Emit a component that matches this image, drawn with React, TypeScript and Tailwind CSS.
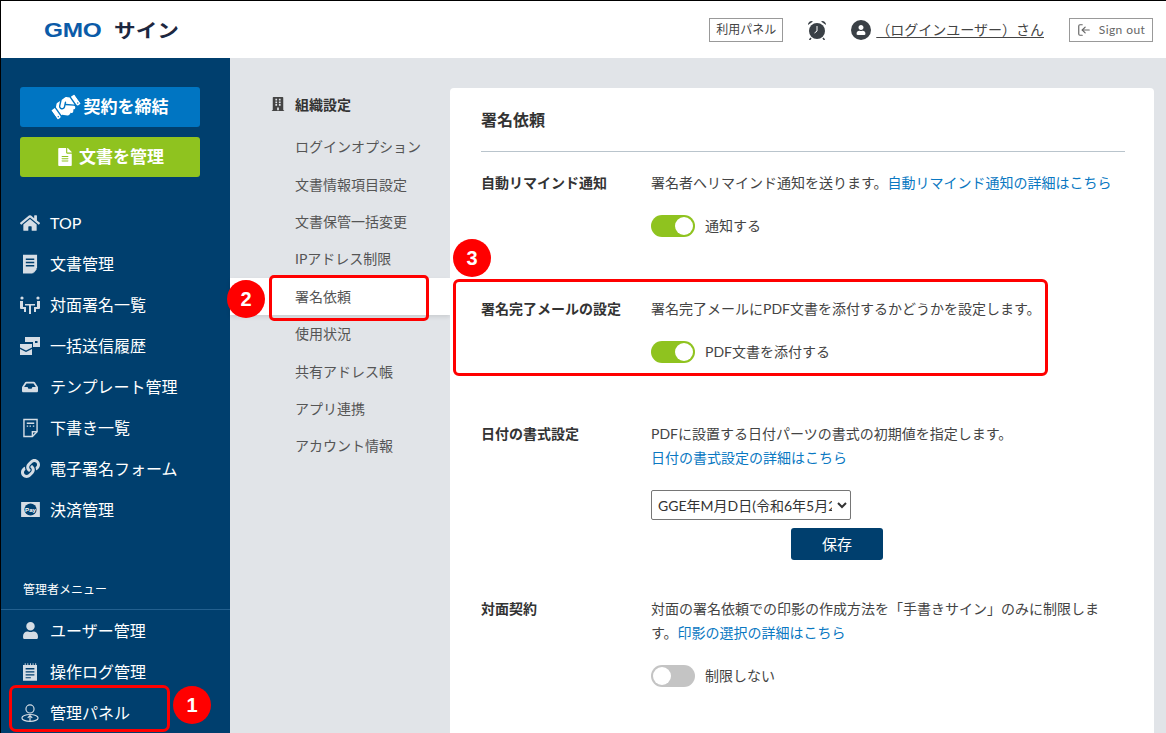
import {
  FaBuilding,
  FaFileAlt,
  FaHandshake,
  FaHome,
  FaInbox,
  FaLink,
  FaStickyNote,
  FaUser,
} from "react-icons/fa";
import { LuLogIn } from "react-icons/lu";
import type { ReactNode } from "react";

const FONT = "font-['Lato','Noto_Sans_CJK_JP',sans-serif]";

const DocIcon = () => (
  <svg viewBox="0 0 16 20" className="w-[15px] h-[20px]" fill="#d5dde5">
    <path d="M0 0h15v14l-5 6H0z" />
    <path d="M3 4h9v1.6H3zM3 7.5h9v1.6H3zM3 11h9v1.6H3z" fill="#003f6e" />
    <path d="M11 15h4l-4 5z" />
  </svg>
);

const FaceIcon = () => (
  <svg viewBox="0 0 20 20" className="w-[20px] h-[20px]" fill="#d5dde5">
    <circle cx="2" cy="3" r="1.6" />
    <circle cx="18" cy="3" r="1.6" />
    <path d="M0 6h3v6h3v5H4v-3H1a1 1 0 0 1-1-1zM20 6h-3v6h-3v5h2v-3h3a1 1 0 0 0 1-1z" />
    <path d="M5 9h10v1.5h-4V19H9v-8.500H5z" />
  </svg>
);

const BulkIcon = () => (
  <svg viewBox="0 0 20 20" className="w-[20px] h-[20px]" fill="#d5dde5">
    <path d="M5 1h15v10h-7V6H5z" />
    <rect x="15" y="5" width="2.500" height="2" fill="#003f6e" />
    <path d="M0 8h12v3.500L6 14.500 0 11.500z" />
    <path d="M0 13l6 3 6-3v6H0z" />
  </svg>
);

const DraftIcon = () => (
  <svg viewBox="0 0 16 20" className="w-[15px] h-[20px]" fill="none" stroke="#d5dde5" strokeWidth="1.500">
    <path d="M1 1h14v13l-5 5H1z" />
    <path d="M4 5h8M4 8h1.500M7 8h1.500M10.500 8h1.500" />
    <path d="M10 19v-5h5" />
  </svg>
);

const PayIcon = () => (
  <svg viewBox="0 0 20 16" className="w-[19px] h-[15px]">
    <rect width="20" height="16" fill="#d5dde5" />
    <circle cx="10" cy="8" r="6.500" fill="#003f6e" />
    <text x="10" y="10.500" textAnchor="middle" fontSize="6.500" fontWeight="700" fill="#fff" fontFamily="Liberation Sans">
      Pay
    </text>
  </svg>
);

const LogIcon = () => (
  <svg viewBox="0 0 16 20" className="w-[14px] h-[20px]" fill="#d5dde5">
    <path d="M0 2h16v18H0z" />
    <path d="M3 5.500h10v1.500H3zM3 9h10v1.500H3zM3 12.500h10v1.500H3zM3 16h6v1.200H3z" fill="#003f6e" />
    <path d="M2 0h1v3H2zM5 0h1v3H5zM8 0h1v3H8zM11 0h1v3h-1zM14 0h1v3h-1z" />
  </svg>
);

const AdminIcon = () => (
  <svg viewBox="0 0 20 20" className="w-[18px] h-[20px]" fill="none" stroke="#d5dde5" strokeWidth="1.300">
    <circle cx="10" cy="5.500" r="4.500" />
    <ellipse cx="10" cy="15.500" rx="9" ry="3.800" />
    <path d="M10 19v-5M7.500 15.500 10 13l2.500 2.500" />
  </svg>
);

const AlarmIcon = () => (
  <svg viewBox="0 0 20 20" className="w-[20px] h-[20px]">
    <circle cx="10" cy="11" r="8" fill="#3a4046" />
    <path d="M1 5a3.500 3.500 0 0 1 5-3.500zM19 5a3.500 3.500 0 0 0-5-3.500z" fill="#3a4046" />
    <path d="M10 6v5l-2.500 2" stroke="#fff" strokeWidth="1" fill="none" />
    <path d="M4 18l-1.500 2M16 18l1.500 2" stroke="#3a4046" strokeWidth="1.500" />
  </svg>
);

const Logo = () => (
  <div className="flex items-center h-[18px] leading-none select-none">
    <span className="font-['Liberation_Sans',sans-serif] font-bold text-[#0b5ba8] text-[20px] tracking-[-0.2px] scale-x-[1.22] origin-left w-[70px]">
      GMO
    </span>
    <span className="font-['Noto_Sans_CJK_JP',sans-serif] font-bold text-[#1d2740] text-[19px] scale-x-[1.14] origin-left">
      サイン
    </span>
  </div>
);

const Toggle = ({ on }: { on: boolean }) => (
  <div
    className={`w-[44px] h-[22px] rounded-full flex items-center px-[2px] ${
      on ? "bg-[#8fc31f] justify-end" : "bg-[#c4c4c4] justify-start"
    }`}
  >
    <div className="w-[18px] h-[18px] rounded-full bg-white" />
  </div>
);

const NavItem = ({ icon, label }: { icon: ReactNode; label: string }) => (
  <div className="h-[41px] flex items-center">
    <div className="w-[30px] ml-[19px] flex justify-center shrink-0 text-[#d5dde5] -translate-x-[5px]">{icon}</div>
    <span className="text-white text-[16px] leading-none">{label}</span>
  </div>
);

const mainNav: { icon: ReactNode; label: string }[] = [
  { icon: <FaHome size={20} />, label: "TOP" },
  { icon: <DocIcon />, label: "文書管理" },
  { icon: <FaceIcon />, label: "対面署名一覧" },
  { icon: <BulkIcon />, label: "一括送信履歴" },
  { icon: <FaInbox size={16} />, label: "テンプレート管理" },
  { icon: <DraftIcon />, label: "下書き一覧" },
  { icon: <FaLink size={19} />, label: "電子署名フォーム" },
  { icon: <PayIcon />, label: "決済管理" },
];

const adminNav: { icon: ReactNode; label: string }[] = [
  { icon: <FaUser size={17} />, label: "ユーザー管理" },
  { icon: <LogIcon />, label: "操作ログ管理" },
  { icon: <AdminIcon />, label: "管理パネル" },
];

const settingsMenu = [
  "ログインオプション",
  "文書情報項目設定",
  "文書保管一括変更",
  "IPアドレス制限",
  "署名依頼",
  "使用状況",
  "共有アドレス帳",
  "アプリ連携",
  "アカウント情報",
];

const Badge = ({ n, className }: { n: number; className: string }) => (
  <div
    className={`absolute w-[38px] h-[38px] rounded-full bg-[#ff0000] text-white font-bold text-[20px] flex items-center justify-center font-['Liberation_Sans',sans-serif] ${className}`}
  >
    {n}
  </div>
);

const Row = ({ label, className, children }: { label: string; className: string; children: ReactNode }) => (
  <div className={`flex ${className}`}>
    <div className="w-[170px] shrink-0 text-[14px] font-bold text-[#333] leading-[24px]">{label}</div>
    <div className="flex-1 text-[14px] text-[#444] leading-[24px]">{children}</div>
  </div>
);

const A = ({ children }: { children: ReactNode }) => <span className="text-[#0a78c2]">{children}</span>;

export default function App() {
  return (
    <div className={`relative w-[1166px] h-[733px] overflow-hidden bg-[#e1e4e8] border-t border-l border-black ${FONT}`}>
      {/* Header */}
      <header className="h-[57px] bg-white flex items-center pl-[43px] pr-[13px]">
        <Logo />
        <div className="ml-auto flex items-center text-[#444]">
          <div className="h-[24px] px-[6px] border border-[#999] text-[12px] flex items-center">利用パネル</div>
          <div className="ml-[24px]">
            <AlarmIcon />
          </div>
          <div className="ml-[24px] w-[20px] h-[20px] rounded-full bg-[#3a4046] flex items-center justify-center text-white">
            <FaUser size={10} />
          </div>
          <span className="ml-[5px] text-[14px] underline underline-offset-2">（ログインユーザー）さん</span>
          <div className="ml-[25px] h-[24px] w-[84px] border border-[#999] text-[12px] text-[#666] flex items-center justify-center gap-[8px] tracking-[0.4px]">
            <LuLogIn size={14} className="rotate-180" />
            Sign out
          </div>
        </div>
      </header>

      <div className="flex h-[675px]">
        {/* Sidebar */}
        <aside className="w-[229px] shrink-0 bg-[#003f6e] flex flex-col">
          <div className="pt-[29px] pl-[19px] flex flex-col gap-[10px]">
            <div className="w-[180px] h-[40px] rounded-[3px] bg-[#0075c2] text-white font-bold text-[17px] flex items-center justify-center gap-[4px]">
              <FaHandshake size={28} className="-rotate-[35deg]" />
              契約を締結
            </div>
            <div className="w-[180px] h-[40px] rounded-[3px] bg-[#8fc31f] text-white font-bold text-[17px] flex items-center justify-center gap-[5px]">
              <FaFileAlt size={18} />
              文書を管理
            </div>
          </div>
          <nav className="mt-[25px]">
            {mainNav.map((item) => (
              <NavItem key={item.label} icon={item.icon} label={item.label} />
            ))}
          </nav>
          <div className="mt-[50px] pl-[22px] text-white text-[12px] leading-[18px] h-[30px] pt-[1px]">管理者メニュー</div>
          <div className="border-t border-[#23608f]" />
          <nav>
            {adminNav.map((item) => (
              <NavItem key={item.label} icon={item.icon} label={item.label} />
            ))}
          </nav>
        </aside>

        {/* Settings menu */}
        <div className="w-[220px] shrink-0 pt-[30px]">
          <div className="flex items-center pl-[41px] h-[32px] text-[14px] font-bold text-[#333]">
            <FaBuilding size={14} className="text-[#444] mr-[10px]" />
            組織設定
          </div>
          <ul className="mt-[8px]">
            {settingsMenu.map((label) => (
              <li
                key={label}
                className={`h-[37.400px] pl-[65px] flex items-center text-[14px] text-[#555] ${
                  label === "署名依頼" ? "bg-white shadow-[0_2px_4px_rgba(0,0,0,0.1)] text-[#444]" : ""
                }`}
              >
                {label}
              </li>
            ))}
          </ul>
        </div>

        {/* Settings panel */}
        <main className="w-[704px] bg-white rounded-t-[4px] mt-[30px] pl-[31px] pr-[29px] relative">
          <h2 className="text-[16px] font-bold text-[#333] pt-[20px] h-[64px] leading-[24px] border-b border-[#b9c4cc]">署名依頼</h2>
          <Row label="自動リマインド通知" className="mt-[19px]">
            <p>
              署名者へリマインド通知を送ります。<A>自動リマインド通知の詳細はこちら</A>
            </p>
            <div className="flex items-center gap-[10px] mt-[19px]">
              <Toggle on />
              <span>通知する</span>
            </div>
          </Row>
          <Row label="署名完了メールの設定" className="mt-[59px]">
            <p>署名完了メールにPDF文書を添付するかどうかを設定します。</p>
            <div className="flex items-center gap-[10px] mt-[19px]">
              <Toggle on />
              <span>PDF文書を添付する</span>
            </div>
          </Row>
          <Row label="日付の書式設定" className="mt-[58px]">
            <p>PDFに設置する日付パーツの書式の初期値を指定します。</p>
            <p>
              <A>日付の書式設定の詳細はこちら</A>
            </p>
            <select className="block mt-[20px] w-[200px] h-[30px] border border-[#767676] rounded-[2px] bg-white text-[14px] text-[#333] px-[2px]">
              <option>GGE年M月D日(令和6年5月20日)</option>
            </select>
            <div className="mt-[8px] ml-[140px] w-[92px] h-[32px] rounded-[3px] bg-[#003f6e] text-white text-[15px] flex items-center justify-center">
              保存
            </div>
          </Row>
          <Row label="対面契約" className="mt-[37px]">
            <p className="w-[450px]">
              対面の署名依頼での印影の作成方法を「手書きサイン」のみに制限します。<A>印影の選択の詳細はこちら</A>
            </p>
            <div className="flex items-center gap-[10px] mt-[19px]">
              <Toggle on={false} />
              <span>制限しない</span>
            </div>
          </Row>
        </main>
      </div>

      {/* Callouts laid over the page */}
      <div className="absolute left-[8px] top-[684px] w-[161px] h-[47px] border-[3px] border-[#f00] rounded-[7px]" />
      <div className="absolute left-[268px] top-[274px] w-[160px] h-[46px] border-[3px] border-[#f00] rounded-[5px]" />
      <div className="absolute left-[452px] top-[278px] w-[595px] h-[97px] border-[3px] border-[#f00] rounded-[6px]" />
      <Badge n={1} className="left-[172px] top-[685px]" />
      <Badge n={2} className="left-[226px] top-[279px]" />
      <Badge n={3} className="left-[452px] top-[238px]" />
    </div>
  );
}
